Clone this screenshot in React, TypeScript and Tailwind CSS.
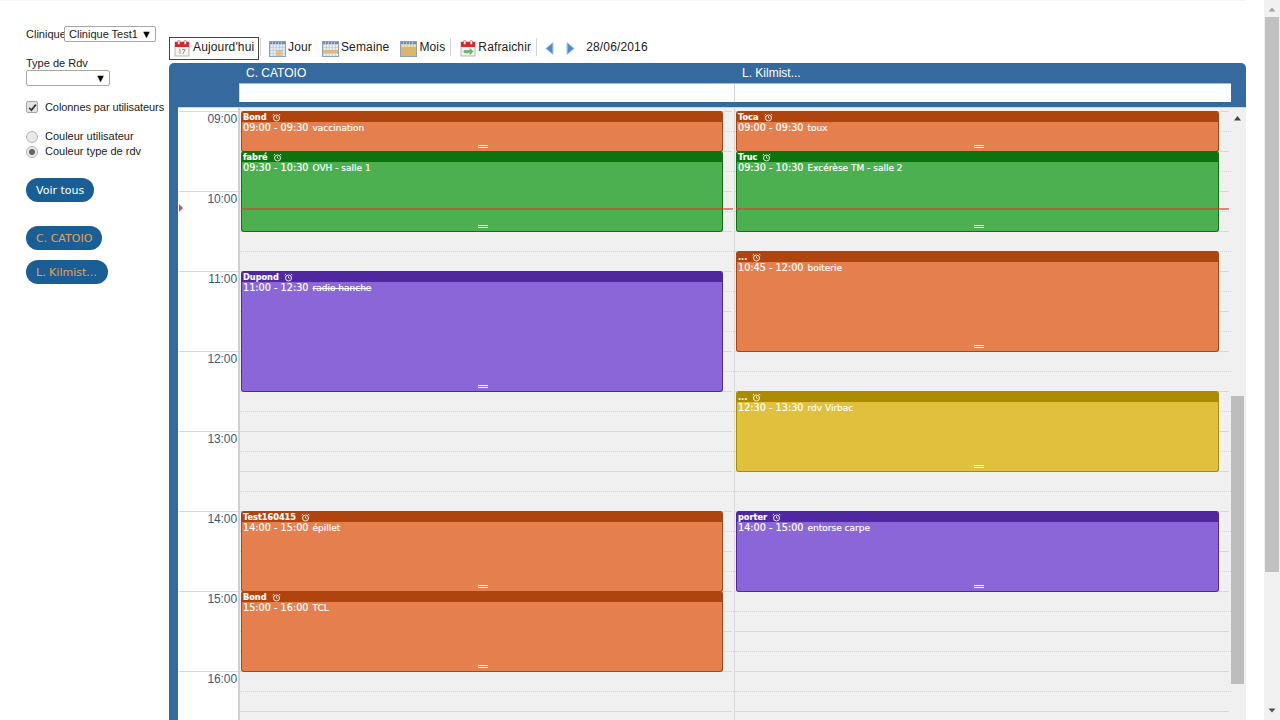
import React from "react";

type Ev = { top: number; h: number; name: string; time: string; label: string; strike?: boolean; c: "o" | "g" | "p" | "y" };

const col1: Ev[] = [
  { top: 0, h: 41, name: "Bond", time: "09:00 - 09:30", label: "vaccination", c: "o" },
  { top: 40, h: 81, name: "fabré", time: "09:30 - 10:30", label: "OVH - salle 1", c: "g" },
  { top: 160, h: 121, name: "Dupond", time: "11:00 - 12:30", label: "radio hanche", strike: true, c: "p" },
  { top: 400, h: 81, name: "Test160415", time: "14:00 - 15:00", label: "épillet", c: "o" },
  { top: 480, h: 81, name: "Bond", time: "15:00 - 16:00", label: "TCL", c: "o" },
];
const col2: Ev[] = [
  { top: 0, h: 41, name: "Toca", time: "09:00 - 09:30", label: "toux", c: "o" },
  { top: 40, h: 81, name: "Truc", time: "09:30 - 10:30", label: "Excérèse TM - salle 2", c: "g" },
  { top: 140, h: 101, name: "...", time: "10:45 - 12:00", label: "boiterie", c: "o" },
  { top: 280, h: 81, name: "...", time: "12:30 - 13:30", label: "rdv Virbac", c: "y" },
  { top: 400, h: 81, name: "porter", time: "14:00 - 15:00", label: "entorse carpe", c: "p" },
];
const times = ["09:00", "10:00", "11:00", "12:00", "13:00", "14:00", "15:00", "16:00"];

const styles = {
  o: { body: "bg-[#e57f4e] border-[#b0440e]", head: "bg-[#b0440e]" },
  g: { body: "bg-[#4caf50] border-[#0d730d]", head: "bg-[#0d730d]" },
  p: { body: "bg-[#8b66d8] border-[#4f27a0]", head: "bg-[#4f27a0]" },
  y: { body: "bg-[#e0c03c] border-[#ad8b00]", head: "bg-[#ad8b00]" },
};

function Alarm() {
  return (
    <svg width="9" height="9" viewBox="0 0 9 9" fill="none" stroke="white" strokeWidth="0.9" className="ml-[5px] shrink-0">
      <circle cx="4.5" cy="5" r="3" />
      <path d="M4.5 3.4V5L5.6 5.6M0.7 2.2L2 0.9M8.3 2.2L7 0.9" />
    </svg>
  );
}

function Event({ e, right }: { e: Ev; right: string }) {
  const s = styles[e.c];
  return (
    <div
      className={`absolute left-[1px] ${right} border border-t-0 rounded-[3px] overflow-hidden flex flex-col text-white font-['DejaVu_Sans',sans-serif] [-webkit-text-stroke:0.15px_white] ${s.body}`}
      style={{ top: e.top, height: e.h }}
    >
      <div className={`h-[11px] shrink-0 pl-[1px] pt-[1px] flex items-center text-[8.2px] font-bold leading-[10px] ${s.head}`}>
        <span>{e.name}</span>
        <Alarm />
      </div>
      <div className="pl-[1px] h-[11px] leading-[11px] whitespace-nowrap flex items-baseline">
        <span className="text-[9.7px]">{e.time}</span>
        <span className={`text-[9px] ml-[4px] ${e.strike ? "line-through" : ""}`}>{e.label}</span>
      </div>
      <div className="mt-auto mb-[3px] ml-[2px] self-center w-[10px] h-[3px] border-y border-white" />
    </div>
  );
}

function Slots() {
  return (
    <div className="flex flex-col">
      {Array.from({ length: 16 }).map((_, i) => (
        <React.Fragment key={i}>
          <div className="h-[20px] border-t border-[#d9d9d9] mr-[2px]" />
          <div className="h-[20px] border-t border-dotted border-[#d6d6d6]" />
        </React.Fragment>
      ))}
    </div>
  );
}

function Column({ events, className, right, lineRight }: { events: Ev[]; className: string; right: string; lineRight: string }) {
  return (
    <div className={`relative pt-[3px] bg-[#f0f0f0] ${className}`}>
      <div className="relative">
        <Slots />
        {events.map((e, i) => (
          <Event key={i} e={e} right={right} />
        ))}
        <div className={`absolute left-[1px] ${lineRight} top-[97px] h-[2px] bg-[#d9402c]/60`} />
      </div>
    </div>
  );
}

function Cal({ kind }: { kind: "today" | "day" | "week" | "month" | "refresh" }) {
  if (kind === "today" || kind === "refresh") {
    return (
      <svg width="16" height="17" viewBox="0 0 16 17" className="shrink-0">
        <rect x="1" y="2" width="14" height="14" fill="#f4f4f0" stroke="#b9b9b0" />
        <rect x="1" y="2" width="14" height="5" fill="#d8282c" />
        <rect x="3.5" y="0.5" width="2.5" height="4" rx="1" fill="#e9e9e9" stroke="#a33" strokeWidth="0.5" />
        <rect x="10" y="0.5" width="2.5" height="4" rx="1" fill="#e9e9e9" stroke="#a33" strokeWidth="0.5" />
        {kind === "today" ? (
          <path d="M5 9.5h1V14M8 9.5h3L9 14" fill="none" stroke="#9a9a9a" strokeWidth="1" />
        ) : (
          <path d="M4 10.5h6V8.5l3 3-3 3v-2H4zM5 13h3" fill="#6db56d" stroke="#4f9a4f" strokeWidth="0.5" />
        )}
      </svg>
    );
  }
  const cells: React.ReactNode[] = [];
  for (let r = 0; r < 4; r++) {
    for (let c = 0; c < 5; c++) {
      let fill = "#e6eef8";
      if (kind === "day" && c >= 2 && c <= 3 && r >= 2) fill = "#f7c850";
      if (kind === "week" && r === 2) fill = "#f5bb44";
      if (kind === "week" && r !== 2) fill = "#f4f1e4";
      if (kind === "month") fill = r === 0 ? "#fbdf96" : "#f8b232";
      cells.push(<rect key={`${r}${c}`} x={1.5 + c * 3} y={4.5 + r * 3} width="2.4" height="2.4" fill={fill} />);
    }
  }
  return (
    <svg width="17" height="17" viewBox="0 0 17 17" className="shrink-0">
      <rect x="0.5" y="1.5" width="16" height="15" fill="#a9bdd6" stroke="#8aa2c2" />
      <rect x="1" y="2" width="15" height="2" fill="#6f8db3" />
      <path d="M3 3h1M6 3h1M9 3h1M12 3h1" stroke="#e8eef6" strokeWidth="1" />
      {cells}
    </svg>
  );
}

function Sep() {
  return <div className="w-px h-[18px] bg-[#d5d5d5] shrink-0 mb-[3px]" />;
}

function Arrow({ flip }: { flip?: boolean }) {
  return (
    <svg width="9" height="13" viewBox="0 0 9 13" className={`shrink-0 ${flip ? "-scale-x-100" : ""}`}>
      <path d="M8 0.5V12.5L0.7 6.5Z" fill="#4f8ccb" stroke="#b5cde6" strokeWidth="1" />
    </svg>
  );
}

function Pill({ children, orange, cls }: { children: React.ReactNode; orange?: boolean; cls: string }) {
  return (
    <div
      className={`h-[24px] rounded-[12px] bg-[#1a5e96] pl-[10px] pt-[2px] flex items-center text-[11px] font-['DejaVu_Sans',sans-serif] ${orange ? "text-[#e9a04e]" : "text-white"} ${cls}`}
    >
      {children}
    </div>
  );
}

function Radio({ on }: { on?: boolean }) {
  return (
    <span className="w-[12px] h-[12px] rounded-full border border-[#b5b5b5] bg-[#e9e9e9] flex items-center justify-center shrink-0">
      {on && <span className="w-[6px] h-[6px] rounded-full bg-[#666]" />}
    </span>
  );
}

function Select({ text, cls }: { text: string; cls: string }) {
  return (
    <div className={`h-[16px] border border-[#a8a8a8] rounded-[2px] flex items-center pl-[4px] pr-[3px] text-[11px] bg-white ${cls}`}>
      <span>{text}</span>
      <span className="ml-auto text-[11px] leading-none text-black">▼</span>
    </div>
  );
}

export default function App() {
  return (
    <div className="w-[1280px] h-[720px] overflow-hidden flex bg-white text-[#222] font-['Liberation_Sans',Arial,sans-serif]">
      <div className="flex-1 flex h-full min-w-0 border-t border-[#f5f5f5] mr-[18px]">
        {/* Sidebar */}
        <aside className="w-[169px] shrink-0 pl-[26px] pt-[25px] text-[11px]">
          <div className="flex items-center h-[16px]">
            <span className="w-[38px]">Clinique</span>
            <Select text="Clinique Test1" cls="w-[92px]" />
          </div>
          <div className="mt-[15px] h-[13px] leading-[13px]">Type de Rdv</div>
          <Select text="" cls="w-[84px]" />
          <div className="mt-[14px] flex items-center gap-[7px] h-[14px] whitespace-nowrap">
            <span className="w-[12px] h-[12px] rounded-[2px] border border-[#a8a8a8] bg-[#e3e3e3] flex items-center justify-center shrink-0">
              <svg width="9" height="9" viewBox="0 0 9 9">
                <path d="M1.2 4.8L3.4 7.2L7.8 1.6" fill="none" stroke="#333" strokeWidth="1.7" />
              </svg>
            </span>
            <span className="tracking-[-0.08px]">Colonnes par utilisateurs</span>
          </div>
          <div className="mt-[15px] flex items-center gap-[7px] h-[15px]">
            <Radio />
            <span>Couleur utilisateur</span>
          </div>
          <div className="flex items-center gap-[7px] h-[15px]">
            <Radio on />
            <span>Couleur type de rdv</span>
          </div>
          <Pill cls="w-[68px] mt-[19px]">Voir tous</Pill>
          <Pill orange cls="w-[76px] mt-[24px]">C. CATOIO</Pill>
          <Pill orange cls="w-[82px] mt-[10px]">L. Kilmist...</Pill>
        </aside>

        {/* Main */}
        <main className="flex-1 min-w-0 flex flex-col pt-[36px]">
          <div className="h-[23px] flex items-center text-[12px] tracking-[0.15px] whitespace-nowrap shrink-0">
            <div className="w-[90px] h-[23px] border border-[#444] flex items-center pl-[4px] gap-[3px]">
              <Cal kind="today" />
              <span className="pb-[3px]">Aujourd'hui</span>
            </div>
            <div className="ml-[1px]"><Sep /></div>
            <div className="ml-[8px] flex items-center gap-[2px]"><Cal kind="day" /><span className="pb-[3px]">Jour</span></div>
            <div className="ml-[10px] flex items-center gap-[2px]"><Cal kind="week" /><span className="pb-[3px]">Semaine</span></div>
            <div className="ml-[11px] flex items-center gap-[2px]"><Cal kind="month" /><span className="pb-[3px]">Mois</span></div>
            <div className="ml-[5px]"><Sep /></div>
            <div className="ml-[9px] flex items-center gap-[2px]"><Cal kind="refresh" /><span className="pb-[3px]">Rafraichir</span></div>
            <div className="ml-[5px]"><Sep /></div>
            <div className="ml-[8px]"><Arrow /></div>
            <div className="ml-[12px]"><Arrow flip /></div>
            <span className="ml-[11px] pb-[3px]">28/06/2016</span>
          </div>

          <div className="relative mt-[3px] flex-1 min-h-0 flex flex-col rounded-t-[5px] bg-[#366a9f] overflow-hidden">
            <div className="shrink-0 h-[44px] flex flex-col">
              <div className="h-[20px] flex items-center text-[12px] text-white pl-[77px]">
                <span className="w-[496px]">C. CATOIO</span>
                <span>L. Kilmist...</span>
              </div>
              <div className="ml-[70px] mr-[15px] h-[19px] bg-white border-t border-[#9fbcdc] flex">
                <div className="w-[496px] border-l border-[#cfd6de] border-r" />
                <div className="flex-1" />
              </div>
            </div>
            <div className="flex-1 min-h-0 pl-[9px]">
              <div className="h-full flex border-t border-[#c5d6e8]">
                <div className="w-[60px] shrink-0 bg-white pt-[3px] pl-[1px] text-[12px] text-[#41597a]">
                  {times.map((t) => (
                    <div key={t} className="h-[80px] border-t border-[#d9d9d9] text-right pr-[1px] leading-[14px] tracking-[-0.1px]">
                      {t}
                    </div>
                  ))}
                </div>
                <div className="w-[2px] shrink-0 bg-[#d0d0d0]" />
                <Column events={col1} className="w-[494px] shrink-0" right="right-[11px]" lineRight="right-[1px]" />
                <div className="w-px shrink-0 bg-[#d8d8d8]" />
                <Column events={col2} className="w-[496px] shrink-0" right="right-[12px]" lineRight="right-[2px]" />
                <div className="flex-1 bg-[#f0f0f0] flex flex-col items-start">
                  <svg width="13" height="6" viewBox="0 0 13 6" className="mt-[7px]">
                    <path d="M3 5.5L6.5 1L10 5.5Z" fill="#444" />
                  </svg>
                  <div className="w-[13px] h-[288px] bg-[#bdbdbd] mt-[275px]" />
                </div>
              </div>
            </div>
            <div className="absolute left-[10px] top-[141px] w-0 h-0 border-y-[4px] border-y-transparent border-l-[4px] border-l-[#c8487e]" />
          </div>
        </main>
      </div>

      {/* Browser scrollbar */}
      <div className="w-[16px] shrink-0 bg-[#f1f1f1] flex flex-col items-center">
        <svg width="10" height="6" viewBox="0 0 10 6" className="mt-[6px]">
          <path d="M1.5 5.5L5 1.5L8.5 5.5Z" fill="#a3a3a3" />
        </svg>
        <div className="w-[14px] h-[555px] bg-[#c1c1c1] mt-[5px] ml-[-1px]" />
        <svg width="10" height="6" viewBox="0 0 10 6" className="mt-[136px]">
          <path d="M1.5 0.5L5 4.5L8.5 0.5Z" fill="#505050" />
        </svg>
      </div>
    </div>
  );
}
